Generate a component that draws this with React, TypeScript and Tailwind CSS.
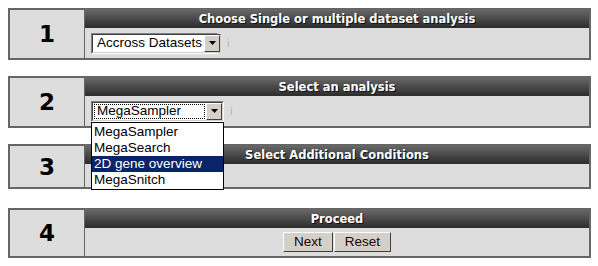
import type { ReactNode } from "react";

const options = ["MegaSampler", "MegaSearch", "2D gene overview", "MegaSnitch"];

function Arrow() {
    return (
        <div className="flex h-full w-[16px] items-center justify-center border border-t-white border-l-white border-r-[#404040] border-b-[#404040] bg-[#d4d0c8]">
            <svg width="7" height="4" viewBox="0 0 7 4">
                <polygon points="0,0 7,0 3.5,4" fill="#000" />
            </svg>
        </div>
    );
}

function FakeSelect({ value, width, focused }: { value: string; width: string; focused?: boolean }) {
    return (
        <div className={`flex h-[21px] ${width} items-stretch border border-t-[#808080] border-l-[#808080] border-r-white border-b-white`}>
            <div className="flex flex-1 items-stretch border border-t-[#404040] border-l-[#404040] border-r-[#d4d0c8] border-b-[#d4d0c8] bg-white">
                <div className="flex flex-1 items-center p-px">
                    <span
                        className={`flex h-full flex-1 items-center whitespace-nowrap pl-[2px] text-[13.5px] leading-none text-black ${
                            focused ? "border border-dotted border-black" : "border border-transparent"
                        }`}
                    >
                        {value}
                    </span>
                </div>
                <Arrow />
            </div>
        </div>
    );
}

function Panel({ num, title, height, children }: { num: string; title: string; height: string; children?: ReactNode }) {
    return (
        <div className={`ml-2 flex w-[583px] ${height} border-2 border-[#666]`}>
            <div className="flex w-[75px] items-center justify-center border-r border-[#666] bg-[#dddddd] pt-px font-['DejaVu_Sans',sans-serif] text-[23px] font-bold text-black">
                {num}
            </div>
            <div className="flex flex-1 flex-col">
                <div className="flex h-[18px] items-center justify-center bg-gradient-to-b from-[#676767] to-[#2c2c2c] pt-px font-['DejaVu_Sans',sans-serif] text-[11.5px] font-bold text-white [text-shadow:1px_1px_0_#111]">
                    {title}
                </div>
                <div className="relative flex flex-1 items-center bg-[#dddddd]">{children}</div>
            </div>
        </div>
    );
}

export default function App() {
    return (
        <div className="h-[266px] w-[598px] bg-white pt-2 font-['Liberation_Sans',Arial,sans-serif]">
            <Panel num="1" title="Choose Single or multiple dataset analysis" height="h-[52px]">
                <div className="ml-[6px] flex items-center gap-[9px]">
                    <FakeSelect value="Accross Datasets" width="w-[127px]" />
                    <span className="text-[11px] text-[#b5b5b5]">i</span>
                </div>
            </Panel>

            <div className="mt-4">
                <Panel num="2" title="Select an analysis" height="h-[52px]">
                    <div className="ml-[6px] flex items-center gap-[6px]">
                        <FakeSelect value="MegaSampler" width="w-[133px]" focused />
                        <span className="text-[11px] text-[#b5b5b5]">i</span>
                    </div>
                </Panel>
            </div>

            <div className="relative z-10 ml-[91px] h-0">
                <ul className="absolute left-0 top-[-6px] w-[133px] border border-black bg-white py-px">
                    {options.map((o) => (
                        <li
                            key={o}
                            className={`flex h-[16px] items-center pl-[2px] text-[13.5px] leading-none ${
                                o === "2D gene overview" ? "bg-[#0a246a] text-white" : "text-black"
                            }`}
                        >
                            {o}
                        </li>
                    ))}
                </ul>
            </div>

            <div className="mt-4">
                <Panel num="3" title="Select Additional Conditions" height="h-[45px]" />
            </div>

            <div className="mt-[19px]">
                <Panel num="4" title="Proceed" height="h-[50px]">
                    <div className="flex flex-1 justify-center gap-px">
                        {["Next", "Reset"].map((b) => (
                            <button
                                key={b}
                                className="h-[20px] border border-t-white border-l-white border-r-[#404040] border-b-[#404040] bg-[#d4d0c8] px-[10px] text-[13.5px] leading-none text-[#1a0000]"
                            >
                                {b}
                            </button>
                        ))}
                    </div>
                </Panel>
            </div>
        </div>
    );
}
